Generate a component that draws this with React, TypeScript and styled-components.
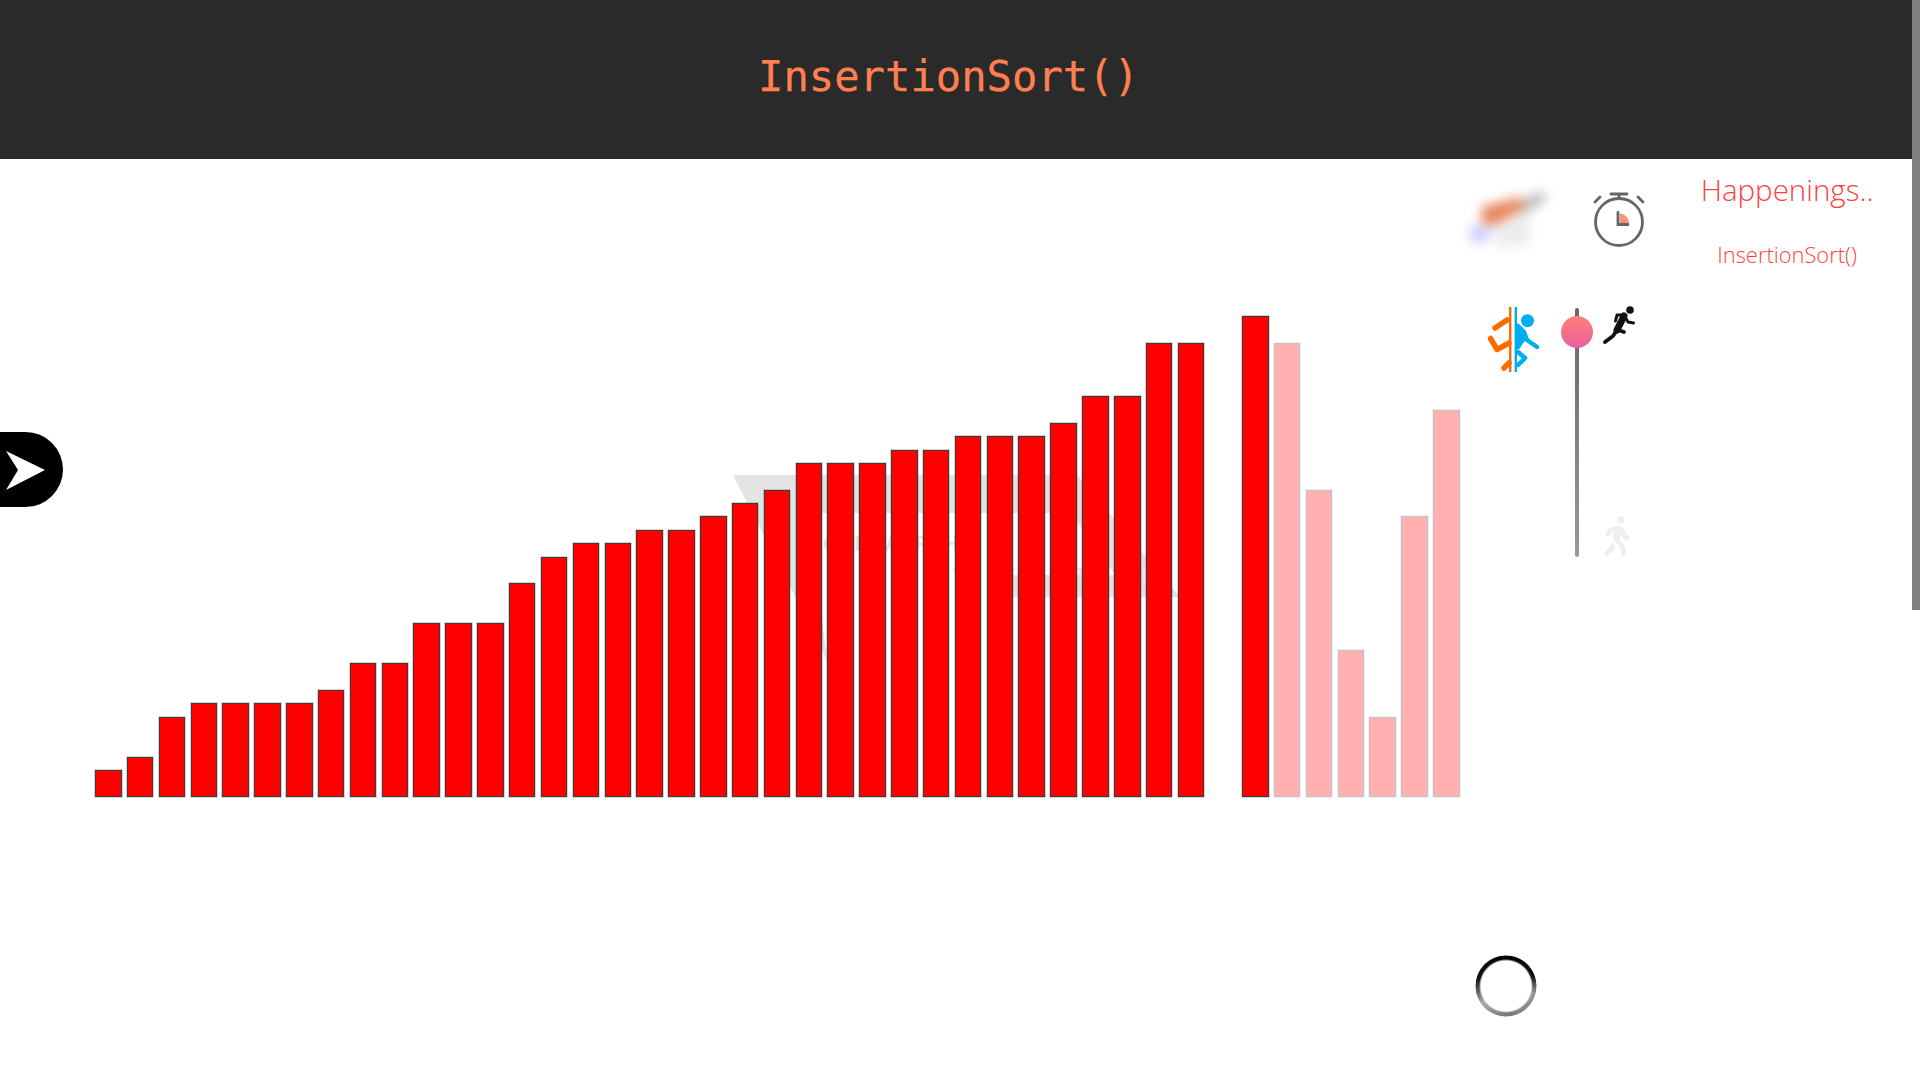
import React from "react";
import styled, { createGlobalStyle } from "styled-components";
import { FaWalking } from "react-icons/fa";

const UNIT = 13.36;

// bar values, in the order they stand on the page
const sorted = [2, 3, 6, 7, 7, 7, 7, 8, 10, 10, 13, 13, 13, 16, 18, 19, 19, 20, 20, 21, 22, 23, 25, 25, 25, 26, 26, 27, 27, 27, 28, 30, 30, 34, 34];
const waiting = [34, 23, 11, 6, 21, 29];

const GlobalStyle = createGlobalStyle`
  html, body {
    margin: 0;
    padding: 0;
    background: #ffffff;
  }
`;

const App = () => {
  return (
    <Page>
      <GlobalStyle />
      <Header>
        <Title>InsertionSort()</Title>
      </Header>
      <SideToggle aria-label="open menu">
        <svg width="50" height="44" viewBox="0 0 50 44">
          <polygon points="6,3 45,22 6,42 18,22" fill="#ffffff" />
        </svg>
      </SideToggle>
      <Stage>
        <ChartArea>
          <Watermark viewBox="0 0 460 190" width="460" height="190">
            <polygon points="0,0 344,0 447,122 254,122 264,100 382,100 338,38 76,38 94,185 0,0" fill="#e4e4e4" />
            <text x="90" y="76" fontFamily="Liberation Sans, sans-serif" fontSize="22" fontWeight="700" letterSpacing="14" fill="#e8e8e8">GRAPHICAL</text>
            <text x="130" y="108" fontFamily="Liberation Sans, sans-serif" fontSize="22" fontWeight="700" letterSpacing="14" fill="#e8e8e8">SORT VIEWER</text>
          </Watermark>
          <Bars>
            {sorted.map((value, i) => (
              <Bar key={i} style={{ height: value * UNIT }} />
            ))}
          </Bars>
          <Bars>
            <Bar style={{ height: 36 * UNIT }} />
            {waiting.map((value, i) => (
              <Bar key={i} $faded style={{ height: value * UNIT }} />
            ))}
          </Bars>
        </ChartArea>
        <Controls>
          <TopIcons>
            <BlurMark viewBox="0 0 80 60" width="80" height="60">
              <path d="M26 34 L60 26 L58 56 L26 58 Z" fill="#ececec" />
              <path d="M40 16 L70 3 L76 10 L50 26 Z" fill="#b4b4b4" />
              <path d="M10 18 L50 8 L52 20 L24 36 L12 36 Z" fill="#e8845a" />
              <ellipse cx="9" cy="45" rx="11" ry="9" fill="#ccccff" />
            </BlurMark>
            <svg width="54" height="60" viewBox="0 0 54 60">
              <g fill="none" stroke="#666666" strokeWidth="2.8" strokeLinecap="round">
                <circle cx="27" cy="33" r="23.5" />
                <path d="M19 5 H35 M27 5 V9" />
                <path d="M3 13 L8 8 M51 13 L46 8" />
                <path d="M26 23.5 V35.5 H36" />
              </g>
              <path d="M28 24.5 A9.5 9.5 0 0 1 37 34 H28 Z" fill="#ff9270" />
            </svg>
          </TopIcons>
          <SpeedRow>
            <svg width="60" height="70" viewBox="0 0 60 70">
              <g fill="none" stroke="#ff6a00" strokeWidth="5.5" strokeLinecap="round" strokeLinejoin="round">
                <path d="M10 23 L22 15" />
                <path d="M5.5 33.5 L12 44.5 L24 38" />
                <path d="M19 63 L24 58" />
              </g>
              <rect x="24" y="2" width="2.4" height="65" fill="#ff6a00" />
              <rect x="29.6" y="2" width="2.4" height="65" fill="#00aeef" />
              <circle cx="42.5" cy="15.7" r="6.5" fill="#00aeef" />
              <g fill="none" stroke="#00aeef" strokeWidth="4.5" strokeLinecap="round" strokeLinejoin="round">
                <path d="M33 21 L39 27 L42 35 L52 42" />
                <path d="M33 28 L38 34 L33 42" />
                <path d="M33 47 L40 53 L33 60" />
              </g>
              <polygon points="30,18 38,24 40,36 33,42 30,42" fill="#00aeef" />
            </svg>
            <SpeedTrack>
              <SpeedThumb />
            </SpeedTrack>
            <SpeedIcons>
              <svg width="40" height="50" viewBox="0 0 40 50">
                <circle cx="30" cy="10" r="3.8" fill="#111111" />
                <g fill="none" stroke="#111111" strokeLinecap="round" strokeLinejoin="round">
                  <path d="M24 16 L17 30" strokeWidth="7" />
                  <path d="M24 15 L17 15 L15.5 21" strokeWidth="3" />
                  <path d="M25 17 L28 22 L33.5 23" strokeWidth="3" />
                  <path d="M17 30 L13 36 L5 42" strokeWidth="3.8" />
                  <path d="M18 30 L24 32" strokeWidth="3.8" />
                </g>
              </svg>
              <WalkIcon size={40} color="#efefef" />
            </SpeedIcons>
          </SpeedRow>
          <Spinner />
        </Controls>
        <Log>
          <LogTitle>Happenings..</LogTitle>
          <LogEntry>InsertionSort()</LogEntry>
        </Log>
      </Stage>
      <ScrollThumb />
    </Page>
  );
};

export default App;

const Page = styled.div`
  width: 1912px;
  background: #ffffff;
`;

const Header = styled.header`
  display: flex;
  justify-content: center;
  align-items: center;
  height: 159px;
  padding: 0 15px 7px 0;
  box-sizing: border-box;
  background: #2a2a2a;
`;

const Title = styled.h1`
  margin: 0;
  font-family: "DejaVu Sans Mono", monospace;
  font-size: 42.2px;
  font-weight: 400;
  color: #ff7f50;
  -webkit-text-stroke: 0.25px #ff7f50;
`;

const ScrollThumb = styled.div`
  position: fixed;
  top: 0;
  right: 0;
  width: 8px;
  height: 610px;
  background: #808080;
`;

const SideToggle = styled.button`
  position: absolute;
  left: 0;
  top: 432px;
  display: flex;
  align-items: center;
  width: 63px;
  height: 75px;
  padding: 0;
  border: none;
  border-radius: 0 37.5px 37.5px 0;
  background: #000000;
`;

const Stage = styled.main`
  display: flex;
  align-items: flex-start;
  padding-left: 95px;
`;

const ChartArea = styled.section`
  position: relative;
  display: flex;
  flex: none;
  align-items: flex-end;
  gap: 37.85px;
  height: 638px;
`;

const Watermark = styled.svg`
  position: absolute;
  left: 638px;
  top: 316px;
`;

const Bars = styled.div`
  position: relative;
  display: flex;
  align-items: flex-end;
  gap: 5.35px;
`;

const Bar = styled.div<{ $faded?: boolean }>`
  box-sizing: border-box;
  width: 26.5px;
  background: #ff0000;
  border: 1px solid #3c3c3c;
  box-shadow: 0 0 0 0.6px rgba(0, 0, 0, 0.3);
  opacity: ${props => (props.$faded ? 0.3 : 1)};
`;

const Controls = styled.aside`
  display: flex;
  flex: none;
  flex-direction: column;
  width: 190px;
  margin-left: 11px;
  padding-top: 30px;
`;

const TopIcons = styled.div`
  display: flex;
  align-items: center;
  gap: 41px;
  height: 60px;
`;

const BlurMark = styled.svg`
  overflow: visible;
  filter: blur(6px);
`;

const SpeedRow = styled.div`
  display: flex;
  align-items: flex-start;
  margin-top: 56px;
  padding-left: 14px;
`;

const SpeedTrack = styled.div`
  position: relative;
  width: 4px;
  height: 249px;
  margin: 3px 21px 0 30px;
  border-radius: 2px;
  background: linear-gradient(#666666, #999999);
`;

const SpeedThumb = styled.div`
  position: absolute;
  left: -14px;
  top: 8px;
  width: 32px;
  height: 32px;
  border-radius: 50%;
  background: linear-gradient(#ff8075, #e860a0);
`;

const SpeedIcons = styled.div`
  display: flex;
  flex-direction: column;
  justify-content: space-between;
  height: 256px;
  margin-top: -5px;
`;

const WalkIcon = styled(FaWalking)`
  margin-left: -3px;
`;

const Spinner = styled.div`
  width: 62px;
  height: 62px;
  margin-top: 398px;
  margin-left: 4px;
  border-radius: 50%;
  background: conic-gradient(#000000 0deg, #111111 70deg, #999999 105deg, #777777 180deg, #aaaaaa 235deg, #111111 285deg, #000000 360deg);
  filter: blur(0.4px);
  -webkit-mask: radial-gradient(circle, transparent 25px, #000000 27px, #000000 30px, transparent 31px);
  mask: radial-gradient(circle, transparent 25px, #000000 27px, #000000 30px, transparent 31px);
`;

const Log = styled.section`
  display: flex;
  flex: none;
  flex-direction: column;
  align-items: center;
  width: 253px;
  padding-top: 12px;
  font-family: "Open Sans", sans-serif;
  font-weight: 300;
  color: #ff3f3f;
`;

const LogTitle = styled.div`
  font-size: 29.5px;
  line-height: 38px;
`;

const LogEntry = styled.div`
  margin-top: 32px;
  font-size: 21.9px;
  line-height: 28px;
`;
